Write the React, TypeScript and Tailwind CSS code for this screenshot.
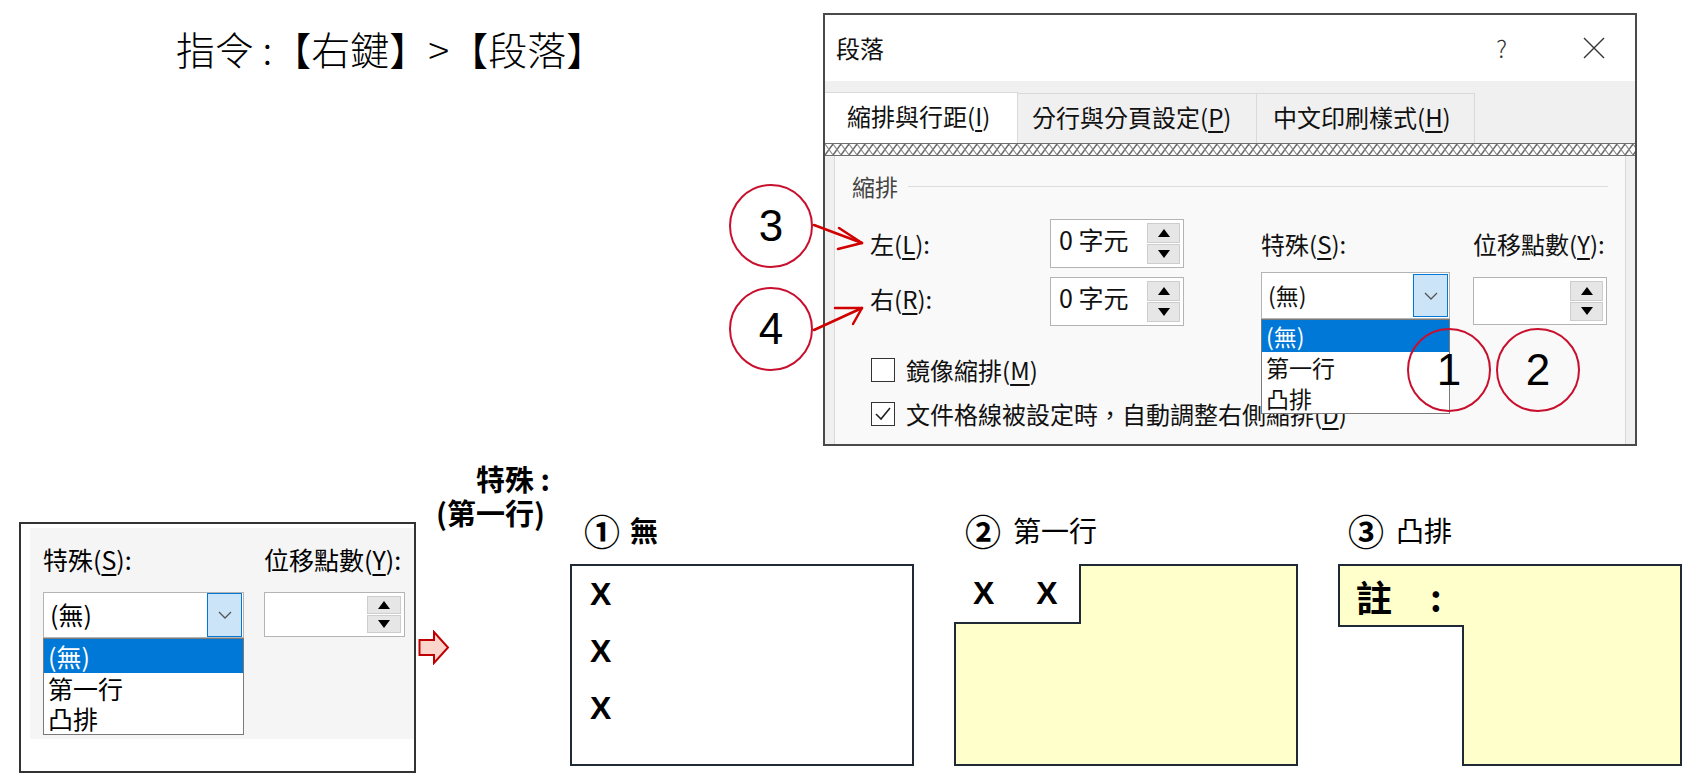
import React from "react";

const CJK = "font-['Noto_Sans_CJK_TC','Noto_Sans_CJK_JP',sans-serif]";
const LAT = "font-['Liberation_Sans',Arial,sans-serif]";

function Tri({ up }: { up?: boolean }) {
    return up ? (
        <span className="w-0 h-0 border-x-[6px] border-x-transparent border-b-[8px] border-b-black" />
    ) : (
        <span className="w-0 h-0 border-x-[6px] border-x-transparent border-t-[8px] border-t-black" />
    );
}

function SpinButtons({ className }: { className: string }) {
    return (
        <div className={`flex flex-col gap-px ${className}`}>
            <div className="flex-1 bg-[#e6e6e6] border border-[#cdcdcd] flex items-center justify-center">
                <Tri up />
            </div>
            <div className="flex-1 bg-[#e6e6e6] border border-[#cdcdcd] flex items-center justify-center">
                <Tri />
            </div>
        </div>
    );
}

function Chevron() {
    return (
        <svg width="16" height="10" viewBox="0 0 16 10">
            <polyline points="2,2 8,8 14,2" fill="none" stroke="#555" strokeWidth="1.3" />
        </svg>
    );
}

function SpinBox({ value, className }: { value: string; className: string }) {
    return (
        <div className={`bg-white border border-[#b4b4b4] flex ${className}`}>
            <span className="flex-1 pl-[8px] pt-[4px] text-[25px] leading-[30px]">{value}</span>
            <SpinButtons className="w-[33px] my-[3px] mr-[3px]" />
        </div>
    );
}

function ComboWithList({ w, h, listH, big }: { w: string; h: string; listH: string; big?: boolean }) {
    return (
        <div className={`relative ${w} ${h}`}>
            <div className="h-full bg-white border border-[#b4b4b4] flex items-center">
                <span className={`flex-1 pl-[6px] ${big ? "text-[25px]" : "text-[23px]"}`}>(無)</span>
                <div className={`w-[35px] mr-[1px] bg-[#cce4f7] border border-[#0078d7] flex items-center justify-center ${big ? "h-[44px]" : "h-[43px]"}`}>
                    <Chevron />
                </div>
            </div>
            <div className={`absolute left-0 top-full w-full ${listH} bg-white border border-[#7a7a7a] z-10 flex flex-col leading-none ${big ? "text-[25px]" : "text-[23px]"}`}>
                <div className={`${big ? "h-[34px]" : "h-[32px]"} bg-[#0078d7] text-white pl-[4px] flex items-center`}>(無)</div>
                <div className={`${big ? "h-[31px]" : "h-[31px]"} pl-[4px] flex items-center`}>第一行</div>
                <div className={`${big ? "h-[29px]" : "h-[30px]"} pl-[4px] flex items-center`}>凸排</div>
            </div>
        </div>
    );
}

function Check({ checked }: { checked?: boolean }) {
    return (
        <div className="w-[24px] h-[24px] border-[1.5px] border-[#333] bg-white flex items-center justify-center shrink-0">
            {checked && (
                <svg width="18" height="18" viewBox="0 0 18 18">
                    <polyline points="2,9 7,14 16,3" fill="none" stroke="#222" strokeWidth="1.6" />
                </svg>
            )}
        </div>
    );
}

function Circle({ n, pos }: { n: string; pos: string }) {
    return (
        <div className={`absolute ${pos} w-[84px] h-[84px] rounded-full border-2 border-[#c8102e] flex items-center justify-center text-[44px] text-black ${LAT}`}>
            {n}
        </div>
    );
}

function Dialog() {
    return (
        <div className={`w-[814px] h-[433px] mt-[13px] mr-[59px] ml-auto border-2 border-[#4a4a4a] flex flex-col bg-[#f0f0f0] text-[#111] ${CJK}`}>
            {/* title bar */}
            <div className="h-[66px] bg-white flex items-center pl-[11px] shrink-0">
                <span className="text-[24px]">段落</span>
                <span className="ml-auto text-[24px] font-light text-[#333]">?</span>
                <svg className="ml-[76px] mr-[30px]" width="22" height="22" viewBox="0 0 22 22">
                    <path d="M1 1 L21 21 M21 1 L1 21" stroke="#333" strokeWidth="1.4" />
                </svg>
            </div>
            {/* tabs */}
            <div className="h-[62px] flex items-end shrink-0 text-[24px]">
                <div className="w-[193px] h-[51px] bg-white border-t border-r border-[#d9d9d9] flex items-center pl-[22px] pb-[4px] whitespace-nowrap">
                    縮排與行距(<u className="underline-offset-4">I</u>)
                </div>
                <div className="w-[239px] h-[50px] border-t border-r border-[#d9d9d9] flex items-center pl-[14px] pb-[4px] whitespace-nowrap">
                    分行與分頁設定(<u className="underline-offset-4">P</u>)
                </div>
                <div className="w-[218px] h-[50px] border-t border-r border-[#d9d9d9] flex items-center pl-[16px] pb-[4px] whitespace-nowrap">
                    中文印刷樣式(<u className="underline-offset-4">H</u>)
                </div>
            </div>
            {/* hatched band */}
            <div className="h-[13px] shrink-0 border-y border-[#6e6e6e] bg-white">
                <svg className="block w-full h-full">
                    <defs>
                        <pattern id="hatch" width="8" height="11" patternUnits="userSpaceOnUse">
                            <path d="M0 11 L8 0" stroke="#6a6a6a" strokeWidth="1.6" />
                            <path d="M0 0 L8 11" stroke="#8c8c8c" strokeWidth="1.1" />
                        </pattern>
                    </defs>
                    <rect width="100%" height="100%" fill="url(#hatch)" />
                </svg>
            </div>
            {/* tab page */}
            <div className="flex-1 px-[9px] flex">
                <div className="flex-1 bg-[#f9f9f9] border-x border-[#d9d9d9] flex flex-col text-[24px]">
                    <div className="ml-[17px] mr-[17px] mt-[17px] h-[26px] flex items-center gap-[10px]">
                        <span className="text-[23px] text-[#444]">縮排</span>
                        <div className="flex-1 h-px bg-[#dcdcdc]" />
                    </div>
                    <div className="ml-[35px] mt-[20px] grid grid-cols-[180px_211px_212px_134px] grid-rows-[49px_54px] gap-y-[4px]">
                        <div className="flex items-center">左(<u className="underline-offset-4">L</u>):</div>
                        <SpinBox value="0 字元" className="w-[134px] h-[49px]" />
                        <div className="flex items-center">特殊(<u className="underline-offset-4">S</u>):</div>
                        <div className="flex items-center whitespace-nowrap">位移點數(<u className="underline-offset-4">Y</u>):</div>

                        <div className="flex items-center">右(<u className="underline-offset-4">R</u>):</div>
                        <SpinBox value="0 字元" className="w-[134px] h-[49px] mt-[5px]" />
                        <ComboWithList w="w-[189px]" h="h-[47px]" listH="h-[95px]" />
                        <div className="mt-[5px] w-[134px] h-[48px] bg-white border border-[#b4b4b4] flex justify-end">
                            <SpinButtons className="w-[33px] my-[3px] mr-[3px]" />
                        </div>
                    </div>
                    <div className="ml-[36px] mt-[32px] h-[24px] flex items-center gap-[11px] leading-none">
                        <Check />
                        <span>鏡像縮排(<u className="underline-offset-4">M</u>)</span>
                    </div>
                    <div className="ml-[36px] mt-[20px] h-[24px] flex items-center gap-[11px] leading-none whitespace-nowrap">
                        <Check checked />
                        <span>文件格線被設定時，自動調整右側縮排(<u className="underline-offset-4">D</u>)</span>
                    </div>
                </div>
            </div>
        </div>
    );
}

export default function App() {
    return (
        <div className={`relative w-[1696px] h-[774px] overflow-hidden bg-white text-black ${CJK}`}>
            {/* top row */}
            <div className="flex h-[446px]">
                <div className="pl-[176px] pt-[25px] text-[39px] font-light leading-[46px] whitespace-pre">指令 :【右鍵】&gt;【段落】</div>
                <Dialog />
            </div>

            {/* bottom row */}
            <div className="flex items-start pl-[19px]">
                {/* cropped dialog snippet */}
                <div className="mt-[76px] w-[397px] h-[251px] border-2 border-[#333] bg-white">
                    <div className="mt-[4px] ml-[9px] h-[211px] bg-[#f5f5f5] pl-[13px] pt-[18px] text-[25px]">
                        <div className="grid grid-cols-[221px_141px] grid-rows-[28px_46px] gap-y-[18px]">
                            <div className="flex items-center">特殊(<u className="underline-offset-4">S</u>):</div>
                            <div className="flex items-center whitespace-nowrap">位移點數(<u className="underline-offset-4">Y</u>):</div>
                            <ComboWithList w="w-[201px]" h="h-[46px]" listH="h-[97px]" big />
                            <div className="w-[141px] h-[45px] bg-white border border-[#b4b4b4] flex justify-end">
                                <SpinButtons className="w-[34px] my-[3px] mr-[3px]" />
                            </div>
                        </div>
                    </div>
                </div>

                {/* label + arrow */}
                <div className="w-[136px] flex flex-col">
                    <div className="mt-[15px] text-right text-[29px] font-bold leading-[34px]">
                        <div className="pr-[2px]">特殊 :</div>
                        <div className="pr-[7px]">(第一行)</div>
                    </div>
                    <svg className="mt-[101px] ml-[2px]" width="32" height="35" viewBox="0 0 32 35">
                        <polygon points="1.5,10 16,10 16,2 30,17.5 16,33 16,25 1.5,25" fill="#fbd5cc" stroke="#c00000" strokeWidth="2" />
                    </svg>
                </div>

                {/* three examples */}
                <div className="ml-[18px] flex gap-[40px]">
                    {/* 1 none */}
                    <div className="w-[344px] flex flex-col">
                        <div className="mt-[66px] h-[36px] flex items-center pl-[14px]">
                            <span className="text-[36px] font-bold leading-none">①</span>
                            <span className="ml-[10px] text-[28px] font-bold">無</span>
                        </div>
                        <div className={`mt-[16px] h-[202px] border-2 border-[#1f2a36] bg-white pl-[18px] flex flex-col text-[32px] font-bold leading-[57px] ${LAT}`}>
                            <span>X</span>
                            <span>X</span>
                            <span>X</span>
                        </div>
                    </div>

                    {/* 2 first line */}
                    <div className="w-[344px] flex flex-col">
                        <div className="mt-[66px] h-[36px] flex items-center pl-[11px]">
                            <span className="text-[36px] font-bold leading-none">②</span>
                            <span className="ml-[12px] text-[28px]">第一行</span>
                        </div>
                        <div className="mt-[16px] h-[202px] flex flex-col">
                            <div className="h-[60px] flex">
                                <div className={`w-[125px] border-b-2 border-[#1f2a36] flex items-center pl-[19px] gap-[42px] text-[32px] font-bold ${LAT}`}>
                                    <span>X</span>
                                    <span>X</span>
                                </div>
                                <div className="flex-1 bg-[#ffffcc] border-t-2 border-x-2 border-[#1f2a36]" />
                            </div>
                            <div className="flex-1 bg-[#ffffcc] border-x-2 border-b-2 border-[#1f2a36]" />
                        </div>
                    </div>

                    {/* 3 hanging */}
                    <div className="w-[344px] flex flex-col">
                        <div className="mt-[66px] h-[36px] flex items-center pl-[10px]">
                            <span className="text-[36px] font-bold leading-none">③</span>
                            <span className="ml-[12px] text-[28px]">凸排</span>
                        </div>
                        <div className="mt-[16px] h-[202px] flex flex-col">
                            <div className="h-[61px] bg-[#ffffcc] border-t-2 border-x-2 border-[#1f2a36] flex items-center pl-[16px] text-[36px] font-bold">
                                <span>註</span>
                                <span className="ml-[38px]">:</span>
                            </div>
                            <div className="flex-1 flex">
                                <div className="w-[124px] border-t-2 border-[#1f2a36]" />
                                <div className="flex-1 bg-[#ffffcc] border-x-2 border-b-2 border-[#1f2a36]" />
                            </div>
                        </div>
                    </div>
                </div>
            </div>

            {/* red annotations */}
            <Circle n="3" pos="left-[729px] top-[184px]" />
            <Circle n="4" pos="left-[729px] top-[287px]" />
            <Circle n="1" pos="left-[1407px] top-[328px] z-20" />
            <Circle n="2" pos="left-[1496px] top-[328px] z-20" />
            <svg className="absolute left-[800px] top-[200px]" width="80" height="140" viewBox="0 0 80 140">
                <g fill="none" stroke="#d00000" strokeWidth="2.5" strokeLinecap="round" strokeLinejoin="round">
                    <path d="M14 25 L62 43" />
                    <path d="M39 28 L62 43 L38 49" />
                    <path d="M14 130 L62 108" />
                    <path d="M35 108 L62 108 L53 124" />
                </g>
            </svg>
        </div>
    );
}
